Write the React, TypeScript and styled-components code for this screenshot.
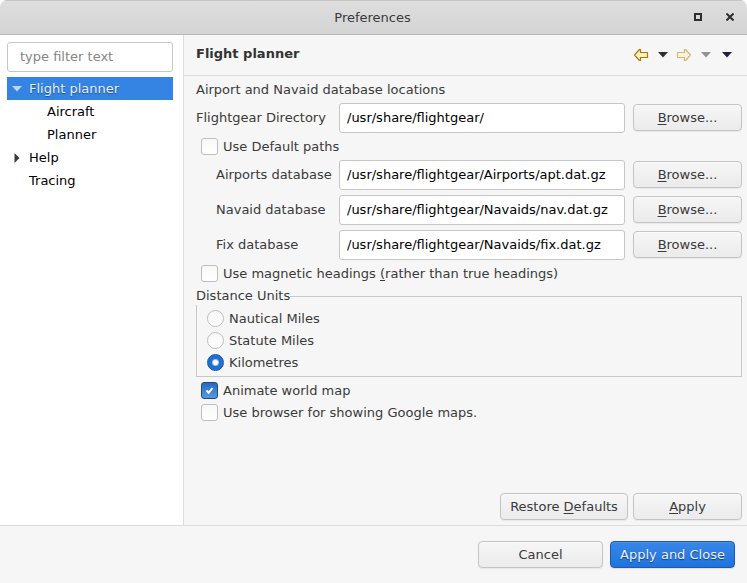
import React, { useState } from "react";
import styled, { createGlobalStyle, css } from "styled-components";

const GlobalStyle = createGlobalStyle`
  *, *::before, *::after { box-sizing: border-box; }
  body {
    margin: 0;
    background: #ffffff;
    color: #3a3a3a;
    font: 13px/18px "DejaVu Sans", sans-serif;
  }
  input, button { font: inherit; color: inherit; }
`;

const Window = styled.div`
  display: grid;
  grid-template-rows: auto 1fr auto;
  min-height: 100vh;
  background: #f6f6f6;
  border-radius: 7px 7px 0 0;
  overflow: hidden;
`;

const TitleBar = styled.header`
  display: grid;
  grid-template-columns: 1fr auto 1fr;
  align-items: center;
  height: 35px;
  padding: 0 7px 0 5px;
  background: linear-gradient(#dedede, #d4d4d4);
  border-top: 1px solid #c4c4c4;
  border-bottom: 1px solid #b8b8b8;
`;

const WindowTitle = styled.h1`
  grid-column: 2;
  margin: 0;
  font-size: 13px;
  font-weight: normal;
`;

const WindowControls = styled.div`
  display: flex;
  justify-content: flex-end;
  gap: 12px;
  padding-bottom: 1px;
`;

const IconButton = styled.button<{ $width: number }>`
  display: grid;
  place-items: center;
  width: ${({ $width }) => $width}px;
  height: 20px;
  padding: 0;
  border: 0;
  background: none;
`;

const Body = styled.div`
  display: grid;
  grid-template-columns: 184px 1fr;
`;

const Sidebar = styled.nav`
  padding: 7px 10px 7px 7px;
  background: #ffffff;
  border-right: 1px solid #dcdcdc;
`;

const TextField = styled.input`
  width: 100%;
  min-width: 0;
  height: 30px;
  padding: 0 7px 2px;
  border: 1px solid #c6c6c6;
  border-radius: 3px;
  background: #ffffff;
  color: #000000;
  outline: none;
`;

const FilterField = styled(TextField)`
  padding: 0 12px 2px;
  &::placeholder { color: #858585; opacity: 1; }
`;

const Tree = styled.ul`
  margin: 5px 0 0;
  padding: 0;
  list-style: none;
`;

const TreeRow = styled.li<{ $level: number; $selected: boolean }>`
  display: flex;
  align-items: center;
  height: 23px;
  padding-left: ${({ $level }) => ($level === 0 ? 0 : 18)}px;
  color: #000000;
  ${({ $selected }) =>
    $selected &&
    css`
      background: #3584e4;
      color: #e6effb;
      text-shadow: 0 1px 1px rgba(0, 0, 0, 0.4);
    `}
`;

const ExpanderSlot = styled.span`
  flex: none;
  width: 22px;
`;

const Main = styled.main`
  display: flex;
  flex-direction: column;
  min-width: 0;
`;

const PageHeader = styled.div`
  display: flex;
  align-items: center;
  justify-content: space-between;
  height: 41px;
  padding: 0 9px 0 12px;
  border-bottom: 1px solid #dcdcdc;
`;

const PageTitle = styled.h2`
  margin: 0 0 3px;
  font-size: 13px;
  color: #333333;
`;

const Toolbar = styled.div`
  display: flex;
  align-items: center;
`;

const Form = styled.form`
  display: flex;
  flex: 1;
  flex-direction: column;
  gap: 5px;
  padding: 4px 5px 5px 12px;
`;

const Heading = styled.div`
  height: 18px;
  line-height: 20px;
`;

const FieldRow = styled.div`
  display: grid;
  grid-template-columns: 135px 1fr 109px;
  align-items: center;
  column-gap: 8px;
`;

const FieldLabel = styled.label<{ $indented: boolean }>`
  padding-left: ${({ $indented }) => ($indented ? 20 : 0)}px;
  white-space: nowrap;
`;

const Choice = styled.label`
  display: flex;
  align-items: center;
  align-self: flex-start;
  gap: 5px;
  height: 17px;
  margin-left: 5px;
  white-space: nowrap;
`;

const choiceMark = css`
  appearance: none;
  flex: none;
  width: 17px;
  height: 17px;
  margin: 0;
  border: 1px solid #bdbdbd;
  background: linear-gradient(#f8f8f8, #ffffff);
`;

const CheckBox = styled.input.attrs({ type: "checkbox" })`
  ${choiceMark}
  border-radius: 3px;
`;

const CheckFrame = styled.span`
  display: grid;
  flex: none;
  & > * { grid-area: 1 / 1; }
  input:checked {
    border-color: #1c4a85;
    background: linear-gradient(#2469c0, #5c97de);
  }
  svg { place-self: center; pointer-events: none; visibility: hidden; }
  input:checked + svg { visibility: visible; }
`;

const Radio = styled.input.attrs({ type: "radio" })`
  ${choiceMark}
  border-radius: 50%;
  &:checked {
    border-color: #1c56a4;
    background: radial-gradient(circle, #ffffff 2px, #a9c6ec 3px, #2070d2 4px);
  }
`;

const Group = styled.fieldset`
  min-width: 0;
  margin: 0;
  padding: 5px 5px 5px 0;
  border: 1px solid #c8c8c8;
`;

const Legend = styled.legend`
  height: 18px;
  margin-left: -1px;
  padding: 0;
  line-height: 17px;
`;

const RadioList = styled.div`
  display: flex;
  flex-direction: column;
  gap: 5px;
  padding-left: 5px;
`;

const Button = styled.button<{ $variant?: "primary" }>`
  height: 27px;
  padding: 0 9px;
  border: 1px solid #c4c4c4;
  border-radius: 4px;
  background: linear-gradient(#f6f6f6, #ebebeb);
  box-shadow: inset 0 1px #fafafa, 0 1px 1px rgba(0, 0, 0, 0.06);
  line-height: 18px;
  white-space: nowrap;
  ${({ $variant }) =>
    $variant === "primary" &&
    css`
      border-color: #185bb5;
      background: linear-gradient(#3986e8, #1f73de);
      box-shadow: inset 0 1px #4a90e8, 0 1px 1px rgba(0, 0, 0, 0.1);
      color: #e9f1fc;
      text-shadow: 0 1px 1px rgba(0, 0, 0, 0.5);
    `}
`;

const BrowseButton = styled(Button)`
  margin-bottom: 1px;
`;

const Mnemonic = styled.span`
  text-decoration: underline;
  text-decoration-thickness: 1px;
  text-decoration-skip-ink: none;
  text-underline-offset: 2px;
`;

const PageActions = styled.div`
  display: grid;
  grid-template-columns: 128px 109px;
  justify-content: end;
  gap: 5px;
  margin-top: auto;
`;

const Footer = styled.footer`
  display: grid;
  grid-template-columns: 125px 125px;
  justify-content: end;
  gap: 7px;
  padding: 15px 12px;
  border-top: 1px solid #dcdcdc;
`;

const Caret = ({ color }: { color: string }) => (
  <svg width="10" height="6" viewBox="0 0 10 6" aria-hidden="true">
    <path d="M0 0h10L5 5.5z" fill={color} />
  </svg>
);

const Arrow = ({ forward = false }: { forward?: boolean }) => (
  <svg width="16" height="14" viewBox="0 0 16 14" opacity={forward ? 0.5 : 1} aria-hidden="true">
    <path
      d={
        forward
          ? "M14.500 7L9.500 1.500H8.500V4.500H1.500V9.500H8.500V12.500H9.500z"
          : "M1.500 7L6.500 1.500H7.500V4.500H14.500V9.500H7.500V12.500H6.500z"
      }
      fill="#fff3c4"
      stroke="#b87408"
      strokeWidth="1.200"
      strokeLinejoin="round"
    />
  </svg>
);

type Node = { name: string; level: number; expanded?: boolean };

const nodes: Node[] = [
  { name: "Flight planner", level: 0, expanded: true },
  { name: "Aircraft", level: 1 },
  { name: "Planner", level: 1 },
  { name: "Help", level: 0, expanded: false },
  { name: "Tracing", level: 0 },
];

type PathFieldProps = { id: string; label: string; value: string; indented?: boolean };

const PathField = ({ id, label, value, indented = false }: PathFieldProps) => (
  <FieldRow>
    <FieldLabel htmlFor={id} $indented={indented}>{label}</FieldLabel>
    <TextField id={id} defaultValue={value} spellCheck={false} />
    <BrowseButton type="button"><Mnemonic>B</Mnemonic>rowse...</BrowseButton>
  </FieldRow>
);

type CheckProps = { children: React.ReactNode; checked?: boolean };

const Check = ({ children, checked = false }: CheckProps) => (
  <Choice>
    <CheckFrame>
      <CheckBox defaultChecked={checked} />
      <svg width="9" height="9" viewBox="0 0 9 9" aria-hidden="true">
        <path d="M1.500 4.500L3.700 6.800L7.500 2" fill="none" stroke="#fff" strokeWidth="2" />
      </svg>
    </CheckFrame>
    <span>{children}</span>
  </Choice>
);

export default function App() {
  const [selected, setSelected] = useState("Flight planner");
  const [unit, setUnit] = useState("Kilometres");

  return (
    <>
      <GlobalStyle />
      <Window>
        <TitleBar>
          <WindowTitle>Preferences</WindowTitle>
          <WindowControls>
            <IconButton type="button" aria-label="Maximize" $width={20}>
              <svg width="8" height="8" viewBox="0 0 8 8" aria-hidden="true">
                <rect x="1" y="1" width="6" height="6" fill="none" stroke="#2e2e2e" strokeWidth="2" />
              </svg>
            </IconButton>
            <IconButton type="button" aria-label="Close" $width={20}>
              <svg width="8" height="8" viewBox="0 0 8 8" aria-hidden="true">
                <path d="M.5.5l7 7M7.500.5L.5 7.500" stroke="#2e2e2e" strokeWidth="2" />
              </svg>
            </IconButton>
          </WindowControls>
        </TitleBar>

        <Body>
          <Sidebar>
            <FilterField type="text" placeholder="type filter text" aria-label="Filter" />
            <Tree role="tree" aria-label="Preference pages">
              {nodes.map(({ name, level, expanded }) => (
                <TreeRow
                  key={name}
                  role="treeitem"
                  aria-level={level + 1}
                  aria-expanded={expanded}
                  aria-selected={selected === name}
                  tabIndex={0}
                  $level={level}
                  $selected={selected === name}
                  onClick={() => setSelected(name)}
                >
                  <ExpanderSlot>
                    {expanded !== undefined && (
                      <IconButton type="button" aria-label={`Toggle ${name}`} $width={20}>
                        {expanded ? (
                          <Caret color="#bcd6f6" />
                        ) : (
                          <svg width="6" height="10" viewBox="0 0 6 10" aria-hidden="true">
                            <path d="M.5 0v10L5.500 5z" fill="#3a3a3a" />
                          </svg>
                        )}
                      </IconButton>
                    )}
                  </ExpanderSlot>
                  {name}
                </TreeRow>
              ))}
            </Tree>
          </Sidebar>

          <Main>
            <PageHeader>
              <PageTitle>Flight planner</PageTitle>
              <Toolbar>
                <IconButton type="button" aria-label="Back" $width={22}><Arrow /></IconButton>
                <IconButton type="button" aria-label="Back history" $width={21}><Caret color="#2e2e2e" /></IconButton>
                <IconButton type="button" aria-label="Forward" $width={22} disabled><Arrow forward /></IconButton>
                <IconButton type="button" aria-label="Forward history" $width={21} disabled><Caret color="#919494" /></IconButton>
                <IconButton type="button" aria-label="Menu" $width={22}><Caret color="#241f3c" /></IconButton>
              </Toolbar>
            </PageHeader>
            <Form onSubmit={(event) => event.preventDefault()}>
              <Heading>Airport and Navaid database locations</Heading>
              <PathField id="directory" label="Flightgear Directory" value="/usr/share/flightgear/" />
              <Check>Use Default paths</Check>
              <PathField id="airports" label="Airports database" value="/usr/share/flightgear/Airports/apt.dat.gz" indented />
              <PathField id="navaids" label="Navaid database" value="/usr/share/flightgear/Navaids/nav.dat.gz" indented />
              <PathField id="fixes" label="Fix database" value="/usr/share/flightgear/Navaids/fix.dat.gz" indented />
              <Check>Use magnetic headings <Mnemonic>(</Mnemonic>rather than true headings)</Check>
              <Group>
                <Legend>Distance Units</Legend>
                <RadioList>
                  {["Nautical Miles", "Statute Miles", "Kilometres"].map((name) => (
                    <Choice key={name}>
                      <Radio name="unit" checked={unit === name} onChange={() => setUnit(name)} />
                      {name}
                    </Choice>
                  ))}
                </RadioList>
              </Group>
              <Check checked>Animate world map</Check>
              <Check>Use browser for showing Google maps.</Check>
              <PageActions>
                <Button type="button">Restore <Mnemonic>D</Mnemonic>efaults</Button>
                <Button type="submit"><Mnemonic>A</Mnemonic>pply</Button>
              </PageActions>
            </Form>
          </Main>
        </Body>

        <Footer>
          <Button type="button">Cancel</Button>
          <Button type="button" $variant="primary">Apply and Close</Button>
        </Footer>
      </Window>
    </>
  );
}
